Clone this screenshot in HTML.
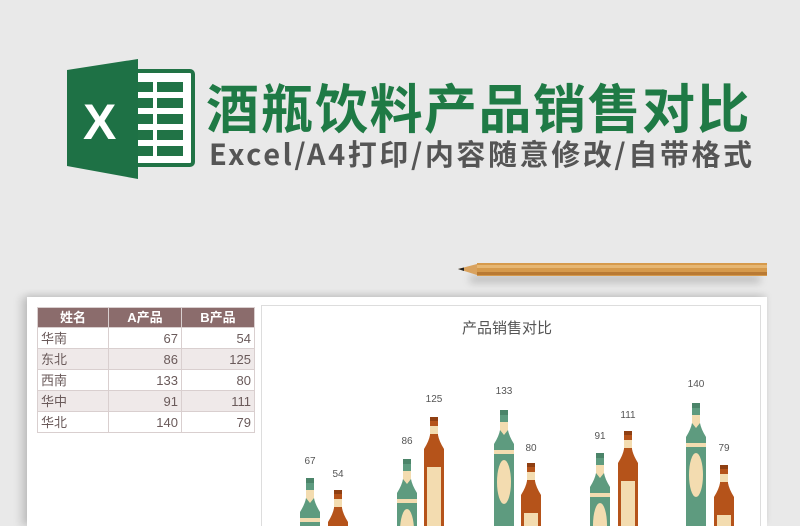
<!DOCTYPE html>
<html><head><meta charset="utf-8"><style>
*{margin:0;padding:0;box-sizing:border-box}
body{width:800px;height:526px;overflow:hidden;background:#e9e9e9;position:relative;font-family:"Liberation Sans","Noto Sans CJK SC",sans-serif}
.t1{position:absolute;left:206px;top:68px;font-size:53px;font-weight:bold;color:#1f7a45;letter-spacing:1.5px;white-space:nowrap;font-family:"Noto Sans CJK SC",sans-serif}
.t2{position:absolute;left:209px;top:132px;font-size:29px;font-weight:bold;color:#555;white-space:nowrap;letter-spacing:2.6px;font-family:"Noto Sans CJK SC",sans-serif}
.paper{position:absolute;left:27px;top:297px;width:740px;height:229px;background:#fff;box-shadow:-6px 0 8px rgba(0,0,0,.15),0 -3px 6px rgba(0,0,0,.08)}
table{position:absolute;left:37px;top:307px;border-collapse:collapse;font-size:13px;color:#6a5a5a}
td,th{border:1px solid #d9cfcf;height:21px;padding:0 3px;line-height:19px}
th{background:#8b6c6c;color:#fff;font-weight:bold;text-align:center;height:20px}
td.n{text-align:right}
tr.g td{background:#efe9e9}
.chart{position:absolute;left:261px;top:305px;width:500px;height:221px;border:1px solid #ddd;border-bottom:none;background:#fff}
.ct{position:absolute;left:462px;top:317px;font-size:15px;color:#555}
.lb{position:absolute;font-size:10px;color:#555;transform:translateX(-50%)}
</style></head><body>
<svg style="position:absolute;left:65px;top:58px" width="132" height="122">
<rect x="68" y="13" width="60" height="94" rx="3" fill="#fff" stroke="#217346" stroke-width="4"/>
<g fill="#217346">
<rect x="92" y="24" width="26" height="10"/><rect x="92" y="40" width="26" height="10"/><rect x="92" y="56" width="26" height="10"/><rect x="92" y="72" width="26" height="10"/><rect x="92" y="88" width="26" height="10"/>
<rect x="72" y="24" width="16" height="10"/><rect x="72" y="40" width="16" height="10"/><rect x="72" y="56" width="16" height="10"/><rect x="72" y="72" width="16" height="10"/><rect x="72" y="88" width="16" height="10"/>
</g>
<polygon points="2,12 73,1 73,121 2,108" fill="#1e7145"/>
<text x="18" y="81" font-size="50" font-weight="bold" fill="#fff" font-family="Liberation Sans">X</text>
</svg>
<div class="t1">酒瓶饮料产品销售对比</div>
<div class="t2">Excel/A4打印/内容随意修改/自带格式</div>
<div style="position:absolute;left:470px;top:275px;width:290px;height:8px;background:rgba(0,0,0,.18);filter:blur(4px)"></div>
<svg style="position:absolute;left:455px;top:260px" width="315" height="22">
<polygon points="3,9 22,4 22,15" fill="#d9a25e"/>
<polygon points="3,9 9,7.5 9,11" fill="#222"/>
<rect x="22" y="3" width="290" height="13" fill="#d69a4c"/>
<rect x="22" y="5" width="290" height="3" fill="#e6b672"/>
<rect x="22" y="12" width="290" height="3" fill="#b97a34"/>
</svg>
<div class="paper"></div>
<table>
<tr><th style="width:71px">姓名</th><th style="width:73px">A产品</th><th style="width:73px">B产品</th></tr>
<tr><td>华南</td><td class="n">67</td><td class="n">54</td></tr>
<tr class="g"><td>东北</td><td class="n">86</td><td class="n">125</td></tr>
<tr><td>西南</td><td class="n">133</td><td class="n">80</td></tr>
<tr class="g"><td>华中</td><td class="n">91</td><td class="n">111</td></tr>
<tr><td>华北</td><td class="n">140</td><td class="n">79</td></tr>
</table>
<div class="chart"></div>
<div class="ct">产品销售对比</div>
<svg style="position:absolute;left:0;top:0" width="800" height="526">
<defs>
<g id="gb"><path d="M-4,0 h8 v20 q1,6 6,14 v200 h-20 v-200 q5,-8 6,-14 z" fill="#5e9b7f"/><rect x="-4" y="0" width="8" height="5" fill="#4b8469"/><path d="M-4,12 h8 v8 l-4,5 l-4,-5z" fill="#f3dcb0"/><rect x="-10" y="40" width="20" height="4" fill="#f3dcb0"/><ellipse cx="0" cy="72" rx="7" ry="22" fill="#f3dcb0"/></g>
<g id="ob"><path d="M-4,0 h8 v18 q1,6 6,14 v200 h-20 v-200 q5,-8 6,-14 z" fill="#b5531a"/><rect x="-4" y="0" width="8" height="4" fill="#8f3f12"/><rect x="-4" y="9" width="8" height="8" fill="#f3dcb0"/><rect x="-7" y="50" width="14" height="120" fill="#f3dcb0"/></g>
</defs>
<use href="#gb" x="310" y="478"/><use href="#ob" x="338" y="490"/>
<use href="#gb" x="407" y="459"/><use href="#ob" x="434" y="417"/>
<use href="#gb" x="504" y="410"/><use href="#ob" x="531" y="463"/>
<use href="#gb" x="600" y="453"/><use href="#ob" x="628" y="431"/>
<use href="#gb" x="696" y="403"/><use href="#ob" x="724" y="465"/>
</svg>
<div class="lb" style="left:310px;top:456px">67</div><div class="lb" style="left:338px;top:469px">54</div>
<div class="lb" style="left:407px;top:436px">86</div><div class="lb" style="left:434px;top:394px">125</div>
<div class="lb" style="left:504px;top:386px">133</div><div class="lb" style="left:531px;top:443px">80</div>
<div class="lb" style="left:600px;top:431px">91</div><div class="lb" style="left:628px;top:410px">111</div>
<div class="lb" style="left:696px;top:379px">140</div><div class="lb" style="left:724px;top:443px">79</div>
</body></html>
